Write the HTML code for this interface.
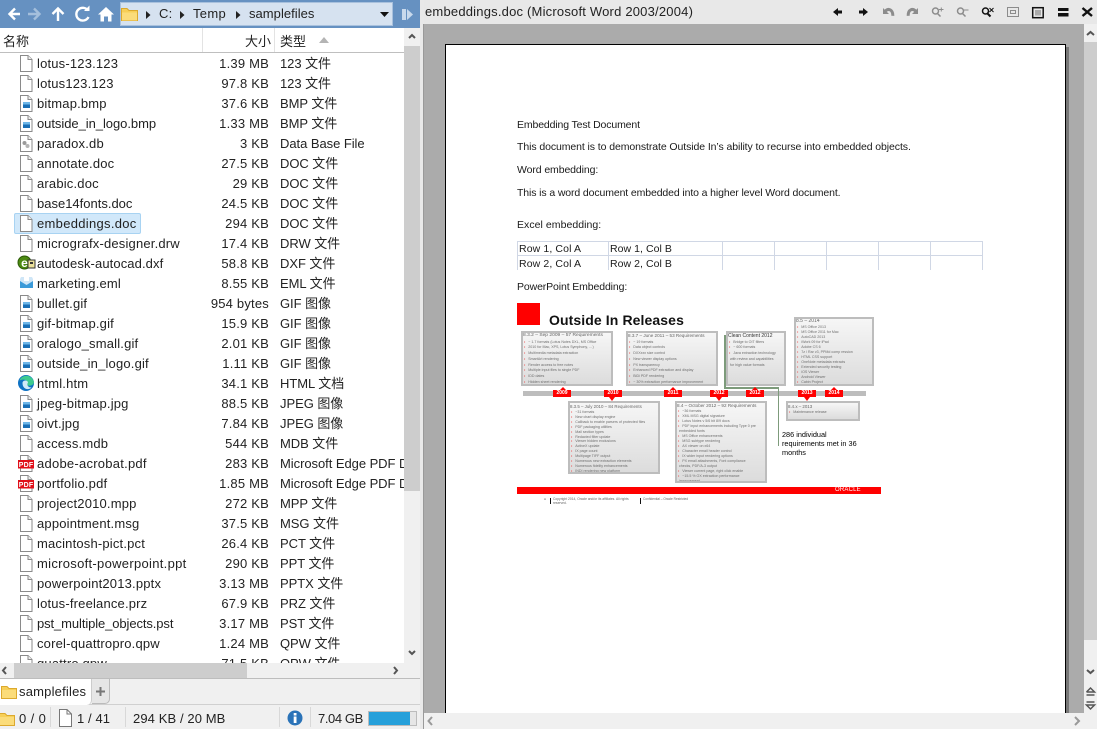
<!DOCTYPE html>
<html><head><meta charset="utf-8"><title>samplefiles</title>
<style>
*{box-sizing:border-box;margin:0;padding:0}
html,body{width:1097px;height:729px;overflow:hidden;background:#f0f0f0}
body{font-family:"Liberation Sans","Noto Sans CJK SC",sans-serif;font-size:13px;color:#222;position:relative}
.a{position:absolute}
svg{display:block;overflow:visible}
#list{left:0;top:53px;width:404px;height:610px;background:#fff;overflow:hidden}
.r{position:relative;height:20px;line-height:20px;white-space:nowrap;letter-spacing:.18px}
.r svg{position:absolute;left:19px;top:2px}
.n{position:absolute;left:37px;top:1px}
.s{position:absolute;right:135px;top:1px;letter-spacing:.2px}
.t{position:absolute;left:280px;top:1px;width:124px;overflow:hidden;letter-spacing:-.05px}
.d{position:absolute;font-size:10.5px;line-height:13px;color:#1a1a1a;white-space:nowrap}
.b{position:absolute;border:2px solid #bdbdbd;background:linear-gradient(#f6f6f6,#dcdcdc);overflow:hidden;color:#6d6d6d;font-size:3.6px;line-height:5.8px;padding:0;white-space:nowrap}
.b b{display:block;font-weight:normal;font-size:4.6px;line-height:6.5px;color:#666}
.b i{font-style:normal;color:#e33;margin:0 3px 0 1px}
.y{position:absolute;height:7px;width:18px;background:#f00;color:#fff;font-size:5px;line-height:7px;text-align:center;font-weight:bold}
</style></head><body>
<svg width="0" height="0" style="position:absolute"><defs>
<g id="doc"><path d="M1.500 .5H9L13 4.500V16.500H1.500Z" fill="#fff" stroke="#8a8a8a"/><path d="M9 .5V4.500H13" fill="#f0f0f0" stroke="#8a8a8a"/></g>
<g id="img"><use href="#doc"/><rect x="4" y="7" width="7" height="6" fill="#1a6fb5"/><rect x="4" y="7" width="7" height="2.500" fill="#6fb7e8"/></g>
<g id="db"><use href="#doc"/><circle cx="5.500" cy="8" r="2" fill="#9a9a9a"/><circle cx="8.500" cy="11" r="2" fill="#b5b5b5"/></g>
<g id="pdf"><use href="#doc"/><rect x="-1" y="5" width="16" height="8.500" fill="#e0101a"/><text x="7" y="12" font-size="7" font-weight="bold" fill="#fff" text-anchor="middle" font-family="Liberation Sans">PDF</text></g>
<g id="edge"><circle cx="7" cy="8" r="8" fill="#0f72c4"/><path d="M.5 5.500C2.500 -.5 12.500 -1.500 15 7 15 10.500 9.500 12 7.500 9.500 10.500 6.500 5.500 3 .5 5.500Z" fill="#3ecb8f"/><path d="M3.500 8C3.500 5 8.500 4.500 9 7.500 7.500 9.500 8.500 12.500 12.500 12.500 9.500 15.500 3.500 14.500 3.500 8Z" fill="#cfe9f8"/></g>
<g id="dxf"><ellipse cx="5.500" cy="7.500" rx="6.500" ry="6.500" fill="#4d8a12" stroke="#2b5a06"/><text x="5.500" y="12" font-size="12" font-weight="bold" fill="#fff" text-anchor="middle" font-family="Liberation Sans">e</text><rect x="9" y="5" width="7" height="8" fill="#eadf9a" stroke="#333"/><rect x="11" y="7" width="3" height="2" fill="#333"/></g>
<g id="eml"><path d="M2 2H13L14 4V13H1V4Z" fill="#cfe6f7"/><path d="M1 6L7.500 10 14 6V13H1Z" fill="#3a9ad9"/><rect x="5" y="2" width="5" height="4" fill="#fff"/></g>
<g id="fld"><path d="M.5 3.500H6L8 5.500H15.500V15.500H.5Z" fill="#f7cf57" stroke="#dca92e"/><rect x="1" y="7" width="14" height="8" fill="#fbdc7a"/></g>
</defs></svg>

<!-- top toolbar -->
<div class="a" style="left:0;top:0;width:420px;height:28px;background:#6691c1"></div>
<svg class="a" style="left:0;top:0" width="120" height="28" fill="none" stroke-width="2.400">
<path d="M20 14H10M15 8.500L9.500 14 15 19.500" stroke="#fff"/>
<path d="M28 14H39M34 8.500L39.500 14 34 19.500" stroke="#a4bfdc"/>
<path d="M58 21V9M52.500 14L58 8.500 63.500 14" stroke="#fff"/>
<path d="M88 10.500A6.400 6.400 0 1 0 88.500 17" stroke="#fff"/><path d="M84 11H89.500V5.500Z" fill="#fff" stroke="none"/>
<path d="M98 14.500L106 7 114 14.500H111.500V21.500H108V16.500H104V21.500H100.500V14.500Z" fill="#fff" stroke="none"/>
</svg>
<div class="a" style="left:120px;top:2px;width:273px;height:24px;background:#d6e2f0;border:1px solid #a9c1dd"></div>
<svg class="a" style="left:121px;top:6px" width="18" height="18"><path d="M.5 2.500H6L8 4.500H16.500V14.500H.5Z" fill="#f7cf57" stroke="#dca92e"/><rect x="1" y="6.500" width="15" height="8" fill="#fbdc7a"/></svg>
<div class="a" style="left:159px;top:5px;line-height:18px;color:#222;letter-spacing:.2px">C:</div>
<div class="a" style="left:193px;top:5px;line-height:18px;color:#222;letter-spacing:.3px">Temp</div>
<div class="a" style="left:249px;top:5px;line-height:18px;color:#222;letter-spacing:.04px">samplefiles</div>
<svg class="a" style="left:145px;top:10px" width="100" height="10" fill="#222"><path d="M1 1L5.500 5 1 9Z"/><path d="M35 1L39.500 5 35 9Z"/><path d="M91 1L95.500 5 91 9Z"/></svg>
<svg class="a" style="left:380px;top:12px" width="10" height="6"><path d="M0 0H9L4.500 5Z" fill="#111"/></svg>
<svg class="a" style="left:401px;top:8px" width="12" height="13"><rect x="1" y="1" width="4" height="11" fill="#c8d9ec"/><path d="M6 1L12 6.500 6 12Z" fill="#c8d9ec"/></svg>

<!-- header -->
<div class="a" style="left:0;top:28px;width:404px;height:25px;background:#fff;border-bottom:1px solid #bfbfbf"></div>
<div class="a" style="left:202px;top:28px;width:1px;height:24px;background:#e3e3e3"></div>
<div class="a" style="left:274px;top:28px;width:1px;height:24px;background:#e3e3e3"></div>
<div class="a" style="left:3px;top:33px;line-height:17px">名称</div>
<div class="a" style="left:245px;top:33px;line-height:17px">大小</div>
<div class="a" style="left:280px;top:33px;line-height:17px">类型</div>
<svg class="a" style="left:319px;top:37px" width="10" height="7"><path d="M0 6L5 0 10 6Z" fill="#b4b4b4"/></svg>

<!-- file list -->
<div class="a" id="list">
<div class="a" style="left:14px;top:160px;width:127px;height:21px;background:#d1e8fa;border:1px solid #a8d3f2;border-radius:2px"></div>
<div class="r"><svg width="16" height="18"><use href="#doc"/></svg><span class="n">lotus-123.123</span><span class="s">1.39 MB</span><span class="t">123 文件</span></div>
<div class="r"><svg width="16" height="18"><use href="#doc"/></svg><span class="n">lotus123.123</span><span class="s">97.8 KB</span><span class="t">123 文件</span></div>
<div class="r"><svg width="16" height="18"><use href="#img"/></svg><span class="n">bitmap.bmp</span><span class="s">37.6 KB</span><span class="t">BMP 文件</span></div>
<div class="r"><svg width="16" height="18"><use href="#img"/></svg><span class="n" style="letter-spacing:-.05px">outside_in_logo.bmp</span><span class="s">1.33 MB</span><span class="t">BMP 文件</span></div>
<div class="r"><svg width="16" height="18"><use href="#db"/></svg><span class="n">paradox.db</span><span class="s">3 KB</span><span class="t">Data Base File</span></div>
<div class="r"><svg width="16" height="18"><use href="#doc"/></svg><span class="n">annotate.doc</span><span class="s">27.5 KB</span><span class="t">DOC 文件</span></div>
<div class="r"><svg width="16" height="18"><use href="#doc"/></svg><span class="n">arabic.doc</span><span class="s">29 KB</span><span class="t">DOC 文件</span></div>
<div class="r"><svg width="16" height="18"><use href="#doc"/></svg><span class="n" style="letter-spacing:0">base14fonts.doc</span><span class="s">24.5 KB</span><span class="t">DOC 文件</span></div>
<div class="r"><svg width="16" height="18"><use href="#doc"/></svg><span class="n" style="letter-spacing:.3px">embeddings.doc</span><span class="s">294 KB</span><span class="t">DOC 文件</span></div>
<div class="r"><svg width="16" height="18"><use href="#doc"/></svg><span class="n">micrografx-designer.drw</span><span class="s">17.4 KB</span><span class="t">DRW 文件</span></div>
<div class="r"><svg width="18" height="18"><use href="#dxf"/></svg><span class="n" style="letter-spacing:.1px">autodesk-autocad.dxf</span><span class="s">58.8 KB</span><span class="t">DXF 文件</span></div>
<div class="r"><svg width="16" height="18"><use href="#eml"/></svg><span class="n">marketing.eml</span><span class="s">8.55 KB</span><span class="t">EML 文件</span></div>
<div class="r"><svg width="16" height="18"><use href="#img"/></svg><span class="n">bullet.gif</span><span class="s">954 bytes</span><span class="t">GIF 图像</span></div>
<div class="r"><svg width="16" height="18"><use href="#img"/></svg><span class="n">gif-bitmap.gif</span><span class="s">15.9 KB</span><span class="t">GIF 图像</span></div>
<div class="r"><svg width="16" height="18"><use href="#img"/></svg><span class="n">oralogo_small.gif</span><span class="s">2.01 KB</span><span class="t">GIF 图像</span></div>
<div class="r"><svg width="16" height="18"><use href="#img"/></svg><span class="n">outside_in_logo.gif</span><span class="s">1.11 KB</span><span class="t">GIF 图像</span></div>
<div class="r"><svg width="16" height="18"><use href="#edge"/></svg><span class="n">html.htm</span><span class="s">34.1 KB</span><span class="t">HTML 文档</span></div>
<div class="r"><svg width="16" height="18"><use href="#img"/></svg><span class="n">jpeg-bitmap.jpg</span><span class="s">88.5 KB</span><span class="t">JPEG 图像</span></div>
<div class="r"><svg width="16" height="18"><use href="#img"/></svg><span class="n">oivt.jpg</span><span class="s">7.84 KB</span><span class="t">JPEG 图像</span></div>
<div class="r"><svg width="16" height="18"><use href="#doc"/></svg><span class="n">access.mdb</span><span class="s">544 KB</span><span class="t">MDB 文件</span></div>
<div class="r"><svg width="16" height="18"><use href="#pdf"/></svg><span class="n" style="letter-spacing:.25px">adobe-acrobat.pdf</span><span class="s">283 KB</span><span class="t">Microsoft Edge PDF Do</span></div>
<div class="r"><svg width="16" height="18"><use href="#pdf"/></svg><span class="n">portfolio.pdf</span><span class="s">1.85 MB</span><span class="t">Microsoft Edge PDF Do</span></div>
<div class="r"><svg width="16" height="18"><use href="#doc"/></svg><span class="n">project2010.mpp</span><span class="s">272 KB</span><span class="t">MPP 文件</span></div>
<div class="r"><svg width="16" height="18"><use href="#doc"/></svg><span class="n">appointment.msg</span><span class="s">37.5 KB</span><span class="t">MSG 文件</span></div>
<div class="r"><svg width="16" height="18"><use href="#doc"/></svg><span class="n">macintosh-pict.pct</span><span class="s">26.4 KB</span><span class="t">PCT 文件</span></div>
<div class="r"><svg width="16" height="18"><use href="#doc"/></svg><span class="n" style="letter-spacing:.3px">microsoft-powerpoint.ppt</span><span class="s">290 KB</span><span class="t">PPT 文件</span></div>
<div class="r"><svg width="16" height="18"><use href="#doc"/></svg><span class="n">powerpoint2013.pptx</span><span class="s">3.13 MB</span><span class="t">PPTX 文件</span></div>
<div class="r"><svg width="16" height="18"><use href="#doc"/></svg><span class="n">lotus-freelance.prz</span><span class="s">67.9 KB</span><span class="t">PRZ 文件</span></div>
<div class="r"><svg width="16" height="18"><use href="#doc"/></svg><span class="n" style="letter-spacing:-.1px">pst_multiple_objects.pst</span><span class="s">3.17 MB</span><span class="t">PST 文件</span></div>
<div class="r"><svg width="16" height="18"><use href="#doc"/></svg><span class="n">corel-quattropro.qpw</span><span class="s">1.24 MB</span><span class="t">QPW 文件</span></div>
<div class="r"><svg width="16" height="18"><use href="#doc"/></svg><span class="n">quattro.qpw</span><span class="s">71.5 KB</span><span class="t">QPW 文件</span></div>
</div>

<!-- left scrollbars -->
<div class="a" style="left:404px;top:28px;width:16px;height:650px;background:#f0f0f0"></div>
<div class="a" style="left:404px;top:46px;width:16px;height:445px;background:#cdcdcd"></div>
<svg class="a" style="left:404px;top:28px" width="16" height="650" fill="none" stroke="#555" stroke-width="2"><path d="M5 10L8 7 11 10"/><path d="M5 623L8 626 11 623"/></svg>
<div class="a" style="left:0;top:663px;width:420px;height:15px;background:#f0f0f0"></div>
<div class="a" style="left:14px;top:663px;width:233px;height:15px;background:#cdcdcd"></div>
<svg class="a" style="left:0;top:663px" width="404" height="15" fill="none" stroke="#555" stroke-width="2"><path d="M6 4L3 7.500 6 11"/><path d="M394 4L397 7.500 394 11"/></svg>

<!-- tab bar -->
<div class="a" style="left:0;top:678px;width:420px;height:1px;background:#bdbdbd"></div>
<div class="a" style="left:0;top:679px;width:420px;height:26px;background:#f0f0f0;border-bottom:1px solid #d0d0d0"></div>
<div class="a" style="left:0;top:679px;width:92px;height:26px;background:#fff;border-right:1px solid #ccc;border-radius:0 0 5px 0"></div>
<div class="a" style="left:92px;top:679px;width:18px;height:25px;background:#e6e6e6;border-right:1px solid #bbb;border-bottom:1px solid #bbb;border-radius:0 0 5px 0"></div>
<svg class="a" style="left:1px;top:683px" width="17" height="16"><use href="#fld"/></svg>
<div class="a" style="left:19px;top:683px;line-height:17px;color:#222;letter-spacing:.2px">samplefiles</div>
<svg class="a" style="left:95px;top:686px" width="11" height="11"><path d="M5.500 1V10M1 5.500H10" stroke="#777" stroke-width="2"/></svg>

<!-- status bar -->
<div class="a" style="left:0;top:705px;width:420px;height:24px;background:#f0f0f0"></div>
<svg class="a" style="left:-1px;top:710px" width="17" height="16"><use href="#fld"/></svg>
<div class="a" style="left:19px;top:710px;line-height:17px;letter-spacing:.4px">0 / 0</div>
<div class="a" style="left:50px;top:707px;width:1px;height:20px;background:#d8d8d8"></div>
<svg class="a" style="left:58px;top:709px" width="16" height="18"><path d="M1.500 .5H9L13.500 5V17.500H1.500Z" fill="#fff" stroke="#777"/><path d="M9 .5V5H13.500" fill="none" stroke="#777"/></svg>
<div class="a" style="left:77px;top:710px;line-height:17px;letter-spacing:.1px">1 / 41</div>
<div class="a" style="left:125px;top:707px;width:1px;height:20px;background:#d8d8d8"></div>
<div class="a" style="left:133px;top:710px;line-height:17px;letter-spacing:.1px">294 KB / 20 MB</div>
<div class="a" style="left:279px;top:707px;width:1px;height:20px;background:#d8d8d8"></div>
<svg class="a" style="left:287px;top:710px" width="16" height="16"><circle cx="8" cy="8" r="7.500" fill="#2a73b8"/><rect x="6.700" y="6.500" width="2.800" height="6.500" fill="#fff"/><rect x="6.700" y="3" width="2.800" height="2.500" fill="#fff"/></svg>
<div class="a" style="left:310px;top:707px;width:1px;height:20px;background:#d8d8d8"></div>
<div class="a" style="left:318px;top:710px;line-height:17px;letter-spacing:-.4px">7.04 GB</div>
<div class="a" style="left:368px;top:711px;width:49px;height:15px;background:#e6e6e6;border:1px solid #bcbcbc"></div>
<div class="a" style="left:369px;top:712px;width:41px;height:13px;background:#26a0da"></div>

<!-- splitter -->
<div class="a" style="left:420px;top:0;width:4px;height:729px;background:#e9e9e9"></div>
<div class="a" style="left:423px;top:24px;width:1px;height:705px;background:#999"></div>

<!-- right pane -->
<div class="a" style="left:424px;top:0;width:673px;height:24px;background:#e8e8e8"></div>
<div class="a" style="left:425px;top:3px;line-height:18px;font-size:13px;color:#222;letter-spacing:.2px;white-space:nowrap">embeddings.doc (Microsoft Word 2003/2004)</div>
<svg class="a" style="left:830px;top:0" width="267" height="24">
<g fill="#111"><path d="M3 12L8 8V10.500H12V13.500H8V16Z"/><path d="M38 12L33 8V10.500H29V13.500H33V16Z"/></g>
<g fill="none" stroke="#8c8c8c" stroke-width="3"><path d="M55.500 11C58.500 8 63 9.500 62.800 15.800"/><path d="M85.500 11C82.500 8 78 9.500 78.200 15.800"/></g>
<g fill="#8c8c8c"><path d="M53 8V14H59Z"/><path d="M88 8V14H82Z"/></g>
<g fill="none" stroke="#8c8c8c" stroke-width="1.500"><circle cx="105.500" cy="11" r="3"/><path d="M107.500 13.500L110.500 16.500"/><path d="M109 9.500H113.500M111.300 7.500V11.500" stroke-width="1"/><circle cx="130.500" cy="11" r="3"/><path d="M132.500 13.500L135.500 16.500"/><path d="M134 10H138.500" stroke-width="1"/><rect x="177.500" y="7.500" width="11" height="9" stroke-width="1"/><rect x="180.500" y="10.500" width="5" height="3" stroke-width="1"/></g>
<g fill="none" stroke="#111" stroke-width="1.500"><circle cx="155.500" cy="11" r="3"/><path d="M157.500 13.500L160.500 16.500" stroke-width="2"/><path d="M159.500 8L163.500 12M163.500 8L159.500 12" stroke-width="1"/><rect x="202.700" y="7.700" width="10.500" height="10" stroke-width="1.500"/></g>
<rect x="205" y="10" width="6" height="5.500" fill="#aaa"/>
<g fill="#111"><rect x="228" y="8" width="10.500" height="3"/><rect x="228" y="13" width="10.500" height="3.500"/></g>
<path d="M252.500 8L262 16M262 8L252.500 16" stroke="#111" stroke-width="2.400"/>
</svg>

<!-- viewer -->
<div class="a" style="left:424px;top:24px;width:660px;height:689px;background:#ababab"></div>
<div class="a" style="left:1066px;top:47px;width:3px;height:666px;background:#777"></div>
<div class="a" style="left:445px;top:44px;width:621px;height:669px;background:#fff;border:1px solid #000;border-bottom:0"></div>
<div class="a" style="left:1084px;top:24px;width:13px;height:689px;background:#f0f0f0"></div>
<div class="a" style="left:1084px;top:42px;width:13px;height:598px;background:#cdcdcd"></div>
<svg class="a" style="left:1084px;top:24px" width="13" height="689" fill="none" stroke="#555" stroke-width="2">
<path d="M3 11L6.500 8 10 11"/><path d="M3 646L6.500 649 10 646"/>
<path d="M2.500 668L6.500 664 10.500 668H2.500M2.500 671H10.500" stroke-width="1.500"/><path d="M2.500 678H10.500M2.500 681H10.500L6.500 685Z" stroke-width="1.500"/></svg>
<div class="a" style="left:424px;top:713px;width:673px;height:16px;background:#f0f0f0"></div>
<svg class="a" style="left:424px;top:713px" width="673" height="16" fill="none" stroke="#999" stroke-width="2"><path d="M8 4L4.500 8 8 12"/><path d="M651 4L655 8 651 12"/></svg>

<!-- document -->
<div class="d" style="left:517px;top:119px;letter-spacing:-.13px">Embedding Test Document</div>
<div class="d" style="left:517px;top:141px;letter-spacing:-.088px">This document is to demonstrate Outside In’s ability to recurse into embedded objects.</div>
<div class="d" style="left:517px;top:164px;letter-spacing:-.1px">Word embedding:</div>
<div class="d" style="left:517px;top:187px;letter-spacing:-.117px">This is a word document embedded into a higher level Word document.</div>
<div class="d" style="left:517px;top:219px;letter-spacing:.05px">Excel embedding:</div>
<div class="a" style="left:517px;top:241px;width:466px;height:29px;border:solid #d0d7e5;border-width:1px 0 0 1px"></div>
<div class="a" style="left:517px;top:255px;width:466px;height:1px;background:#d0d7e5"></div>
<div class="a" style="left:608px;top:241px;width:1px;height:29px;background:#d0d7e5"></div>
<div class="a" style="left:722px;top:241px;width:1px;height:29px;background:#d0d7e5"></div>
<div class="a" style="left:774px;top:241px;width:1px;height:29px;background:#d0d7e5"></div>
<div class="a" style="left:826px;top:241px;width:1px;height:29px;background:#d0d7e5"></div>
<div class="a" style="left:878px;top:241px;width:1px;height:29px;background:#d0d7e5"></div>
<div class="a" style="left:930px;top:241px;width:1px;height:29px;background:#d0d7e5"></div>
<div class="a" style="left:982px;top:241px;width:1px;height:29px;background:#d0d7e5"></div>
<div class="d" style="left:519px;top:243px;letter-spacing:.12px">Row 1, Col A</div>
<div class="d" style="left:610px;top:243px;letter-spacing:.05px">Row 1, Col B</div>
<div class="d" style="left:519px;top:258px;letter-spacing:.12px">Row 2, Col A</div>
<div class="d" style="left:610px;top:258px;letter-spacing:.05px">Row 2, Col B</div>
<div class="d" style="left:517px;top:281px;letter-spacing:-.12px">PowerPoint Embedding:</div>

<!-- slide -->
<div class="a" style="left:517px;top:303px;width:23px;height:22px;background:#f00"></div>
<div class="a" style="left:549px;top:312px;font-size:14px;line-height:16px;font-weight:bold;color:#111;white-space:nowrap;letter-spacing:.1px">Outside In Releases</div>

<div class="b" style="left:521px;top:331px;width:92px;height:55px"><b style="font-size:4.900px">8.3.2 – Sep 2009 – 57 Requirements</b><i>•</i>~ 1.7 formats (Lotus Notes DXL, MS Office<br><i>•</i>2010 for Mac, XPS, Lotus Symphony, …)<br><i>•</i>Multimedia metadata extraction<br><i>•</i>SmartArt rendering<br><i>•</i>Render access to free notes<br><i>•</i>Multiple input files to single PDF<br><i>•</i>IDD dates<br><i>•</i>Hidden sheet rendering</div>
<div class="b" style="left:626px;top:331px;width:92px;height:55px"><b>8.3.7 – June 2011 – 53 Requirements</b><i>•</i>~ 19 formats<br><i>•</i>Data object controls<br><i>•</i>DXXxxx size control<br><i>•</i>New viewer display options<br><i>•</i>PX transparency<br><i>•</i>Enhanced PDF extraction and display<br><i>•</i>BiDi PDF rendering<br><i>•</i>~ 30% extraction performance improvement</div>
<div class="b" style="left:726px;top:331px;width:60px;height:55px"><b style="color:#333;font-size:5px">Clean Content 2012</b><i>•</i>Bridge to OIT filters<br><i>•</i>~ 600 formats<br><i>•</i>Java extraction technology<br>&nbsp;&nbsp;with review and capabilities<br>&nbsp;&nbsp;for high value formats</div>
<div class="b" style="left:794px;top:317px;width:80px;height:69px;line-height:5px"><b style="font-size:5px;line-height:5.500px">8.5 – 2014</b><i>•</i>MS Office 2013<br><i>•</i>MS Office 2011 for Mac<br><i>•</i>AutoCAD 2013<br><i>•</i>iWork 09 for iPad<br><i>•</i>Adobe CS 6<br><i>•</i>7z / Rar v3, PPMd comp ression<br><i>•</i>HTML CSS support<br><i>•</i>OneNote metadata extracts<br><i>•</i>Extended security testing<br><i>•</i>iOS Viewer<br><i>•</i>Android Viewer<br><i>•</i>Cabin Project</div>

<div class="a" style="left:523px;top:391px;width:343px;height:5px;background:#bdbdbd"></div>
<div class="a" style="left:724px;top:335px;width:2px;height:53px;background:#7d9b7b"></div>
<div class="a" style="left:724px;top:387px;width:55px;height:2px;background:#7d9b7b"></div>
<div class="a" style="left:778px;top:387px;width:1px;height:59px;background:#7d9b7b"></div>
<div class="y" style="left:553px;top:390px">2009</div>
<div class="y" style="left:604px;top:390px">2010</div>
<div class="y" style="left:664px;top:390px">2011</div>
<div class="y" style="left:710px;top:390px">2012</div>
<div class="y" style="left:746px;top:390px">2012</div>
<div class="y" style="left:798px;top:390px">2013</div>
<div class="y" style="left:825px;top:390px">2014</div>
<svg class="a" style="left:550px;top:385px" width="300" height="17" fill="#f00"><path d="M10 5L13 2 16 5Z"/><path d="M59 12H65L62 16Z"/><path d="M120 5L123 2 126 5Z"/><path d="M166 12H172L169 16Z"/><path d="M202 5L205 2 208 5Z"/><path d="M254 12H260L257 16Z"/><path d="M281 5L284 2 287 5Z"/></svg>

<div class="b" style="left:568px;top:401px;width:92px;height:73px;line-height:4.900px"><b style="font-size:4.400px;line-height:7px">8.3.5 – July 2010 – 84 Requirements</b><i>•</i>~31 formats<br><i>•</i>New chart display engine<br><i>•</i>Callback to enable parsers of protected files<br><i>•</i>PDF packaging utilities<br><i>•</i>Mail section types<br><i>•</i>Redacted filter update<br><i>•</i>Viewer hidden exclusions<br><i>•</i>ActiveX update<br><i>•</i>IX page count<br><i>•</i>Multipage TIFF output<br><i>•</i>Numerous new extraction elements<br><i>•</i>Numerous fidelity enhancements<br><i>•</i>INDI rendering new platform</div>
<div class="b" style="left:675px;top:401px;width:92px;height:82px;line-height:5px"><b style="line-height:6px">8.4 – October 2012 – 92 Requirements</b><i>•</i>~36 formats<br><i>•</i>XML MSG digital signature<br><i>•</i>Lotus Notes v 5/6 bit 8/9 docs<br><i>•</i>PDF input enhancements including Type 0 pre<br>&nbsp;&nbsp;embedded fonts<br><i>•</i>MS Office enhancements<br><i>•</i>MSG subtype rendering<br><i>•</i>AX viewer on x64<br><i>•</i>Character email header control<br><i>•</i>IX wider input rendering options<br><i>•</i>PX email attachments, Font compliance<br>&nbsp;&nbsp;checks, PDF/A-3 output<br><i>•</i>Viewer current page, right click enable<br><i>•</i>~15.5 % OX extraction performance<br>&nbsp;&nbsp;improvement</div>
<div class="b" style="left:786px;top:401px;width:74px;height:20px;line-height:5px"><b style="font-size:4.400px;line-height:7px">8.4.x – 2013</b><i>•</i>Maintenance release</div>
<div class="a" style="left:782px;top:430px;font-size:7.300px;line-height:9px;color:#000;width:85px">286 individual requirements met in 36 months</div>
<div class="a" style="left:517px;top:487px;width:364px;height:7px;background:#f00"></div>
<div class="a" style="left:835px;top:487px;font-size:6px;line-height:7px;color:#fff;letter-spacing:.2px">ORACLE</div>
<div class="a" style="left:544px;top:498px;font-size:3px;line-height:3px;color:#555;white-space:nowrap">A</div>
<div class="a" style="left:550px;top:498px;width:1px;height:6px;background:#111"></div>
<div class="a" style="left:553px;top:498px;font-size:3.300px;line-height:3.500px;color:#666;white-space:nowrap">Copyright 2014, Oracle and/or its affiliates. All rights<br>reserved.</div>
<div class="a" style="left:640px;top:498px;width:1px;height:6px;background:#111"></div>
<div class="a" style="left:643px;top:498px;font-size:3.200px;line-height:3.500px;color:#666;white-space:nowrap">Confidential – Oracle Restricted</div>
</body></html>
